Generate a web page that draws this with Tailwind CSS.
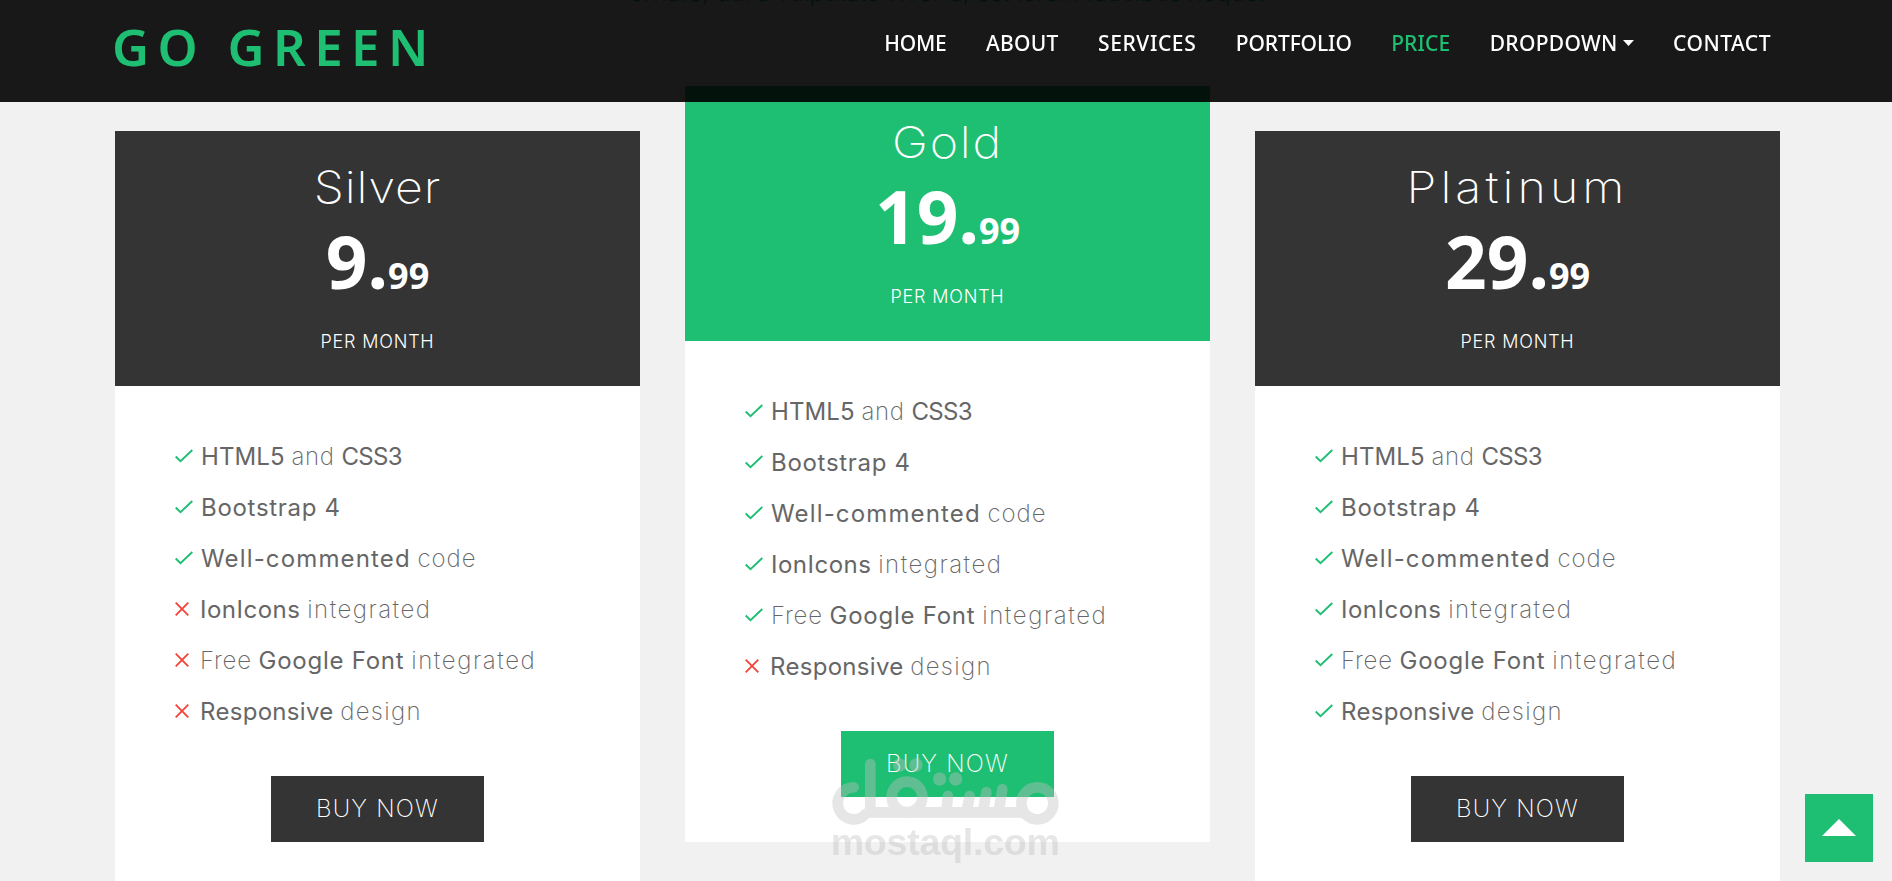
<!DOCTYPE html>
<html lang="en">
<head>
  <meta charset="UTF-8" />
  <meta name="viewport" content="width=device-width, initial-scale=1.0" />
  <title>Go Green</title>
  <script src="https://cdn.jsdelivr.net/npm/@tailwindcss/browser@4"></script>
</head>
<body class="bg-[#f1f1f1] h-screen overflow-hidden font-['Inter',sans-serif] text-[#666]">
  <header class="fixed inset-x-0 top-0 z-10 h-[102px] bg-black/90 pl-[112px] pr-[121px] flex items-start justify-between font-['Noto_Sans',sans-serif]">
    <a class="mt-[12px] text-[51px] leading-[68px] font-semibold tracking-[8.4px] text-[#1ebf73]">GO GREEN</a>
    <nav class="mt-[27px] flex gap-[39.4px] text-[21px] leading-[32px] font-medium text-white">
      <a class="tracking-[-0.2px]">HOME</a>
      <a class="tracking-[0.3px]">ABOUT</a>
      <a class="tracking-[0.6px]">SERVICES</a>
      <a class="tracking-[-0.1px]">PORTFOLIO</a>
      <a class="tracking-[0.1px] text-[#1ebf73]">PRICE</a>
      <a class="tracking-[0.3px] flex items-center gap-[5px]"><span>DROPDOWN</span><svg class="w-[11px] h-[6px]" viewBox="0 0 11 6"><path fill="currentColor" d="M0 0h11L5.500 6z" /></svg></a>
      <a class="tracking-[0.5px]">CONTACT</a>
    </nav>
  </header>

  <main class="ml-[115px] w-[1665px]">
    <p class="-mt-[26px] mb-[119px] h-[38px] text-center text-[24px] leading-[38px] font-light text-[#1ebf73]">ornare, dui a vulputate viverra, est lorem faucibus neque.</p>
    <div id="plans" class="grid grid-cols-3 gap-[45px]"></div>
  </main>

  <a class="fixed right-[19px] bottom-[19px] w-[68px] h-[68px] bg-[#1ebf73] flex items-center justify-center">
    <svg class="w-[34px] h-[17px] mb-[2px]" viewBox="0 0 34 17"><path fill="#fff" d="M17 0l17 17H0z" /></svg>
  </a>

  <!-- watermark -->
  <svg class="fixed left-[800px] top-[700px] w-[300px] h-[181px] opacity-40" viewBox="0 0 900 543" fill="none" stroke="#c0c0c0" stroke-width="32" stroke-linecap="round">
    <path d="M161 262a48 48 0 1 0 36 80M211 192v140" />
    <path d="M205 337H670" />
    <circle cx="712" cy="310" r="48" />
    <circle cx="321" cy="291" r="46" />
    <path d="M444 288l-5 46M509 288l-9 46M559 276l-10 58M607 268l-11 66" />
    <g fill="#c0c0c0" stroke="none">
      <circle cx="299" cy="195" r="20" /><circle cx="348" cy="195" r="20" />
      <circle cx="419" cy="237" r="20" /><circle cx="467" cy="237" r="20" />
      <text x="92" y="465" textLength="688" class="font-['Liberation_Sans',sans-serif] font-bold text-[113px]">mostaql.com</text>
    </g>
  </svg>

  <script>
    const plans = [
      { name: "Silver", price: "9", included: 3, lift: "mt-0", color: "bg-[#343434]", tracking: "tracking-[0.8px]" },
      { name: "Gold", price: "19", included: 5, lift: "-mt-[45px]", color: "bg-[#1ebf73]", tracking: "tracking-[1.6px]" },
      { name: "Platinum", price: "29", included: 6, lift: "mt-0", color: "bg-[#343434]", tracking: "tracking-[3.7px]" },
    ];

    const features = [
      '<b class="font-normal tracking-[0.1px]">HTML5</b> <span class="tracking-[0.7px]">and</span> <b class="font-normal tracking-[-0.7px]">CSS3</b>',
      '<b class="font-normal tracking-[0.7px]">Bootstrap 4</b>',
      '<b class="font-normal tracking-[1.15px]">Well-commented</b> <span class="tracking-[0.9px]">code</span>',
      '<b class="font-normal tracking-[0.5px]">IonIcons</b> <span class="tracking-[1.5px]">integrated</span>',
      '<span class="tracking-[0.8px]">Free</span> <b class="font-normal tracking-[0.75px]">Google Font</b> <span class="tracking-[1.6px]">integrated</span>',
      '<b class="font-normal tracking-[0.3px]">Responsive</b> <span class="tracking-[1.3px]">design</span>',
    ];

    const check = '<svg class="w-[18px] h-[14px] mr-[8px] mb-[2px] text-[#1ebf73]" viewBox="0 0 18 14"><path fill="none" stroke="currentColor" stroke-width="1.9" d="M.700 7.500l4.800 4.700L17.300 1" /></svg>';
    const cross = '<svg class="w-[14px] h-[14px] mr-[11px] mb-[2px] text-[#f44336]" viewBox="0 0 14 14"><path fill="none" stroke="currentColor" stroke-width="1.800" d="M.700.700l12.600 12.600M13.300.700L.700 13.300" /></svg>';

    document.getElementById("plans").innerHTML = plans.map(p => `
      <div class="h-[756px] bg-white ${p.lift}">
        <div class="h-[255px] pt-[34px] text-center text-white ${p.color}">
          <h3 class="text-[44px] leading-[44px] font-extralight scale-x-110 ${p.tracking}">${p.name}</h3>
          <h4 class="mt-[12px] h-[80px] text-[73px] leading-[80px] font-bold font-['Noto_Sans',sans-serif]">${p.price}.<span class="text-[36px] leading-none">99</span></h4>
          <p class="mt-[29px] text-[18px] leading-[24px] font-light tracking-[0.8px]">PER MONTH</p>
        </div>
        <ul class="pt-[45px] pl-[60px] text-[24px] leading-[51px] font-extralight">
          ${features.map((f, i) => `<li class="h-[51px] flex items-center">${i < p.included ? check : cross}<div>${f}</div></li>`).join("")}
        </ul>
        <a class="mt-[39px] mx-auto w-[213px] h-[66px] flex items-center justify-center text-[24px] font-extralight tracking-[1.2px] text-white ${p.color}">BUY NOW</a>
      </div>`).join("");
  </script>
</body>
</html>
